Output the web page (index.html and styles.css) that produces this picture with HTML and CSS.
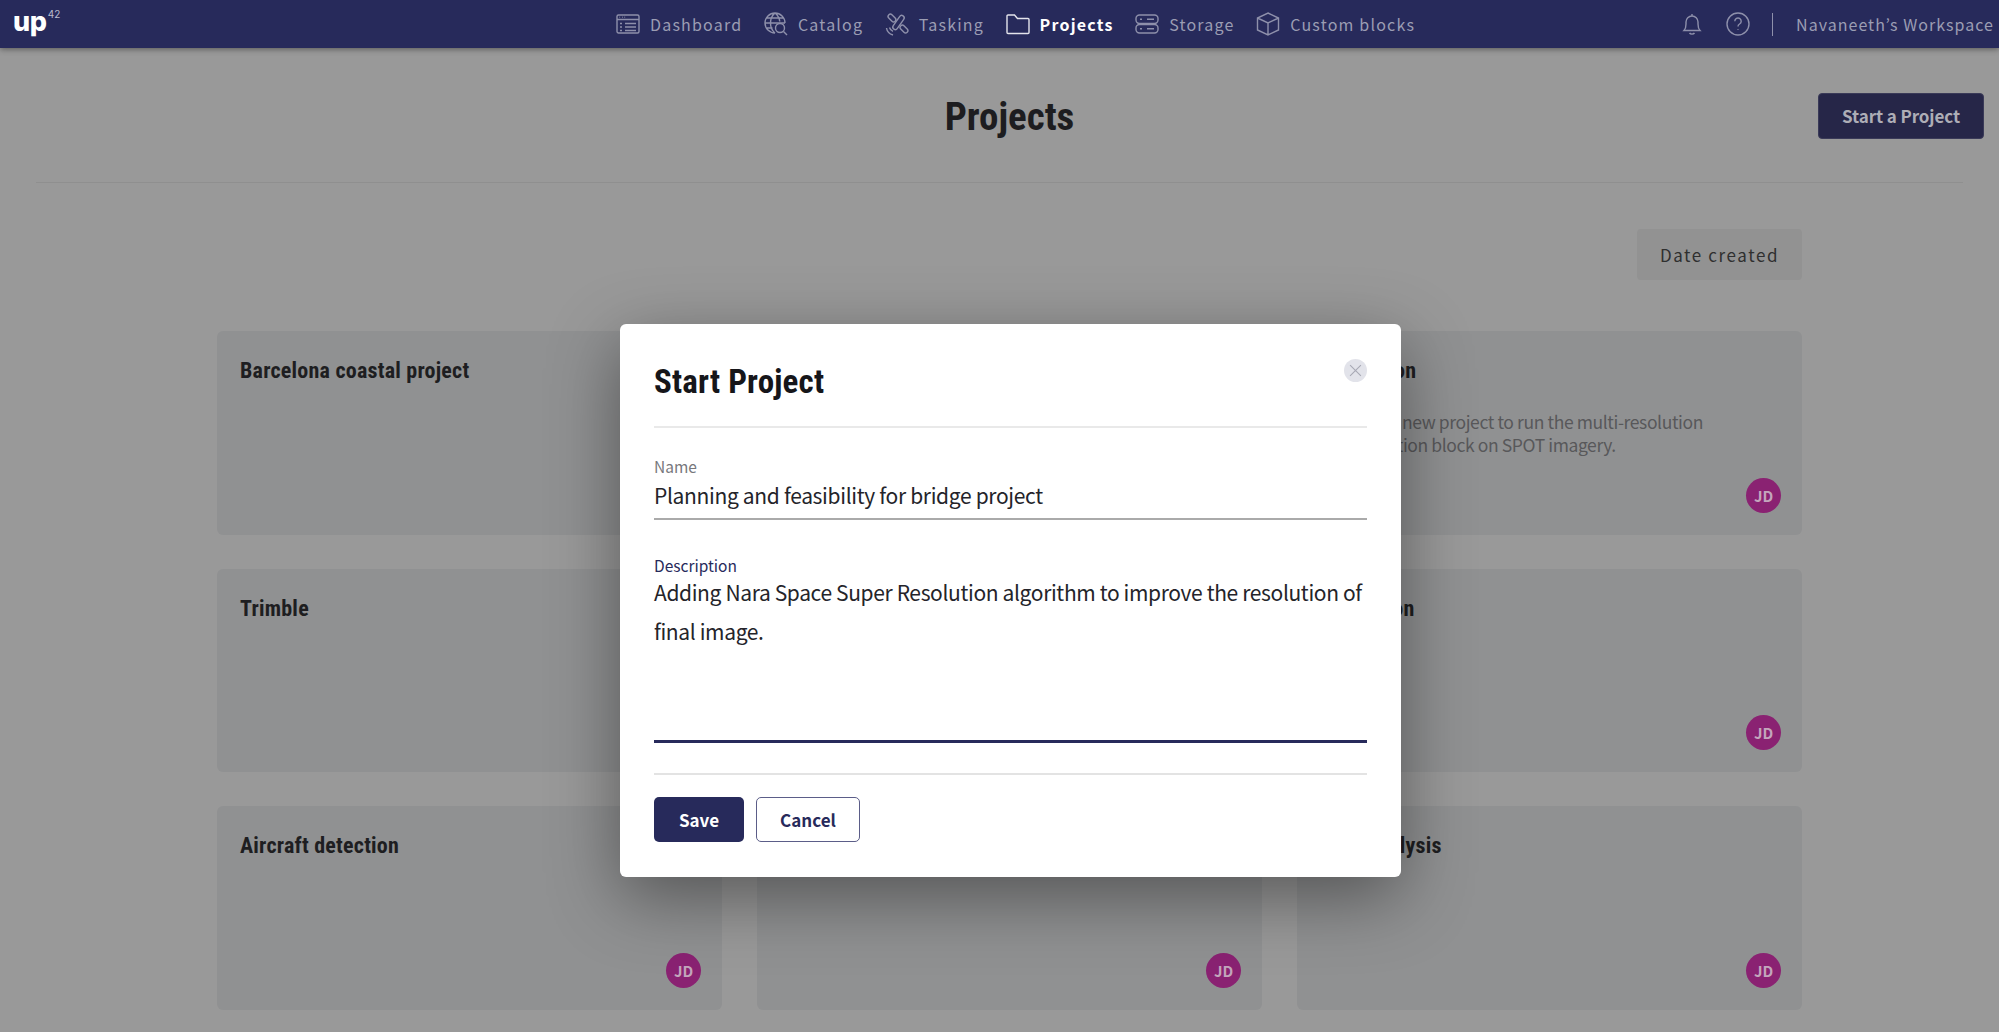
FILE: index.html
```html
<!DOCTYPE html>
<html lang="en">
<head>
<meta charset="utf-8">
<title>Projects</title>
<link rel="stylesheet" href="styles.css">
</head>
<body>
<header class="nav">
  <div class="logo"><span class="logo-up">up</span><span class="logo-42">42</span></div>
  <nav class="nav-items">
    <a class="nav-item">
      <svg class="ico" viewBox="0 0 24 24"><rect x="1" y="3" width="22" height="18" rx="1.5"/><path d="M1 7.5h22M3.5 5.3h.6M6 5.3h.6M8.5 5.3h.6M4 11.5h2M9 11.500h11M4 15h2M9 15h11M4 18.500h2M9 18.500h11"/></svg>
      <span>Dashboard</span>
    </a>
    <a class="nav-item">
      <svg class="ico" viewBox="0 0 24 24"><path d="M11 21a10 10 0 1 1 10-10M1 11h20M2.500 6h17M2.500 16h6M11 1c-6 5-6 15 0 20M11 1c3 2.500 4.500 5.500 4.800 8.500"/><circle cx="16" cy="16" r="4.500"/><path d="M19.500 19.500 23 23"/></svg>
      <span>Catalog</span>
    </a>
    <a class="nav-item">
      <svg class="ico" viewBox="0 0 24 24"><rect x="2.500" y="3.800" width="9" height="4.500" rx="2.200" transform="rotate(45 7 6)"/><rect x="14.500" y="14.800" width="9" height="4.500" rx="2.200" transform="rotate(45 19 17)"/><rect x="5.500" y="8" width="16" height="5" rx="2.500" transform="rotate(-55 13.500 10.500)"/><path d="M1.500 16c.5 3.500 3 6 6.500 7M4.500 15.500c.5 1.800 1.800 3.200 3.500 3.800"/></svg>
      <span>Tasking</span>
    </a>
    <a class="nav-item active">
      <svg class="ico" viewBox="0 0 24 24"><path d="M1 20.500V4a1 1 0 0 1 1-1h6.500l3 3.500H22a1 1 0 0 1 1 1v13a1 1 0 0 1-1 1H2a1 1 0 0 1-1-1z"/></svg>
      <span>Projects</span>
    </a>
    <a class="nav-item">
      <svg class="ico" viewBox="0 0 24 24"><rect x="1" y="3" width="22" height="8.500" rx="3.500"/><rect x="1" y="12.500" width="22" height="8.500" rx="3.500"/><path d="M5 7.200h2M12 7.200h7M5 16.700h2M12 16.700h7"/></svg>
      <span>Storage</span>
    </a>
    <a class="nav-item">
      <svg class="ico" viewBox="0 0 24 24"><path d="M12 1 22.500 6v12L12 23 1.500 18V6zM1.500 6 12 11l10.500-5M12 11v12"/></svg>
      <span>Custom blocks</span>
    </a>
  </nav>
  <div class="nav-right">
    <svg class="ico bell" viewBox="0 0 20 24"><path d="M2 18.500c1.500-1.500 2-3 2-6.500V10a6 6 0 0 1 12 0v2c0 3.500.5 5 2 6.500zM10 2v2M7.500 21c1 1.500 4 1.500 5 0"/></svg>
    <svg class="ico help" viewBox="0 0 24 24"><circle cx="12" cy="12" r="11"/><path d="M8.800 9.200a3.200 3.200 0 1 1 4.800 2.800c-1 .6-1.600 1.200-1.600 2.500M12 17.300v.6"/></svg>
    <span class="nav-sep"></span>
    <span class="workspace">Navaneeth’s Workspace</span>
  </div>
</header>

<main class="page">
  <div class="page-head">
    <h1 class="page-title">Projects</h1>
    <button class="btn-start">Start a Project</button>
  </div>
  <div class="sort-row"><span class="sort-chip">Date created</span></div>
  <section class="grid">
    <article class="card"><h2 class="card-title">Barcelona coastal project</h2><span class="avatar">JD</span></article>
    <article class="card"><h2 class="card-title">Flood monitoring</h2><span class="avatar">JD</span></article>
    <article class="card"><h2 class="card-title">Resolution</h2><p class="card-desc">Creating a new project to run the multi-resolution segmentation block on SPOT imagery.</p><span class="avatar">JD</span></article>
    <article class="card"><h2 class="card-title">Trimble</h2><span class="avatar">JD</span></article>
    <article class="card"><h2 class="card-title">Land cover</h2><span class="avatar">JD</span></article>
    <article class="card"><h2 class="card-title">Inspection</h2><span class="avatar">JD</span></article>
    <article class="card"><h2 class="card-title">Aircraft detection</h2><span class="avatar">JD</span></article>
    <article class="card"><h2 class="card-title">Forest change</h2><span class="avatar">JD</span></article>
    <article class="card"><h2 class="card-title">Crop analysis</h2><span class="avatar">JD</span></article>
  </section>
</main>

<div class="modal">
  <div class="modal-head">
    <h2 class="modal-title">Start Project</h2>
    <span class="modal-close"><svg viewBox="0 0 12 12"><path d="M1 1l10 10M11 1L1 11"/></svg></span>
  </div>
  <div class="field field-name">
    <label class="field-label">Name</label>
    <div class="field-value">Planning and feasibility for bridge project</div>
  </div>
  <div class="field field-desc">
    <label class="field-label focus">Description</label>
    <div class="field-value multiline">Adding Nara Space Super Resolution algorithm to improve the resolution of final image.</div>
  </div>
  <div class="modal-foot">
    <button class="btn-save">Save</button>
    <button class="btn-cancel">Cancel</button>
  </div>
</div>
</body>
</html>
```

FILE: styles.css
```css
* { box-sizing: border-box; }
html, body { margin: 0; height: 100%; overflow: hidden; }
body {
  position: relative;
  background: #999999;
  font-family: "Noto Sans CJK KR", "Noto Sans", sans-serif;
  color: #1c1c1f;
}
.nav {
  height: 48px;
  background: #272a5b;
  display: flex;
  align-items: center;
  box-shadow: 0 1px 6px rgba(0, 0, 0, .45);
  position: relative;
  z-index: 1;
}
.logo { flex: 0 0 616px; padding-left: 13px; display: flex; align-items: flex-start; color: #fff; height: 30px; }
.logo-up { font: 800 27px/25px Inter, sans-serif; letter-spacing: -.3px; }
.logo-42 { font: 400 10px/11px Inter, sans-serif; color: #b9bace; margin-left: 1px; }
.nav-items { display: flex; gap: 21.6px; }
.nav-item { display: flex; align-items: center; gap: 10px; font-size: 16px; letter-spacing: 1.2px; color: #9b9db3; line-height: 24px; }
.nav-item.active { color: #fff; font-weight: 700; }
.ico { width: 24px; height: 24px; fill: none; stroke: #8e90ab; stroke-width: 1.400; display: block; flex: none; }
.nav-item.active .ico { stroke: #e4e4ec; }
.nav-right { margin-left: auto; display: flex; align-items: center; padding-right: 5px; }
.bell { width: 20px; height: 24px; margin-right: 24px; }
.help { width: 24px; height: 24px; margin-right: 22px; }
.nav-sep { width: 1px; height: 23px; background: #8e90ab; margin-right: 23px; }
.workspace { font-size: 16px; letter-spacing: 1.02px; color: #9b9db3; }

.page { padding: 0 36px; }
.page-head {
  height: 135px;
  display: flex;
  align-items: center;
  justify-content: flex-end;
  position: relative;
  border-bottom: 1px solid #8f8f8f;
}
.page-title {
  position: absolute;
  left: 20px; right: 0;
  margin: 0;
  text-align: center;
  font: 700 39px/48px Roboto, sans-serif;
  font-stretch: 75%;
  color: #1d1d20;
  top: 45px;
}
.btn-start {
  width: 166px; height: 46px;
  margin: 1px -21px 0 0;
  background: #262648;
  border: 1px solid #3a3a58;
  border-radius: 4px;
  color: #adadb6;
  font: 700 17px/24px "Noto Sans CJK KR", sans-serif;
  letter-spacing: -.1px;
}
.sort-row { display: flex; justify-content: flex-end; padding: 46px 161px 0 0; height: 148px; }
.sort-chip {
  width: 165px; height: 51px;
  display: flex; align-items: center; justify-content: center;
  background: #929292;
  border-radius: 4px;
  font-size: 17px;
  letter-spacing: 1.6px;
  color: #2f2f2f;
}
.grid {
  display: grid;
  grid-template-columns: repeat(3, 505px);
  grid-auto-rows: 203.5px;
  gap: 34px 35px;
  margin-left: 181px;
}
.card {
  position: relative;
  background: #909192;
  border-radius: 6px;
  padding: 25px 23px;
}
.card-title { margin: 0; font: 700 22px/30px Roboto, sans-serif; letter-spacing: .22px; font-stretch: 75%; color: #1e1e21; }
.card-desc { margin: 24px 0 0; width: 400px; font-size: 17.5px; letter-spacing: -.4px; line-height: 23px; color: #58585a; }
.avatar {
  position: absolute;
  right: 21px; bottom: 22px;
  width: 35px; height: 35px;
  border-radius: 50%;
  background: #8a2272;
  color: #c3a6bc;
  font-size: 15px;
  font-weight: 700;
  display: flex; align-items: center; justify-content: center;
}

.modal {
  position: absolute;
  left: 620px; top: 324px;
  width: 781px; height: 553px;
  background: #fff;
  border-radius: 6px;
  padding: 0 34px;
  box-shadow: 0 20px 70px rgba(0, 0, 0, .42);
  z-index: 2;
}
.modal-head { height: 104px; border-bottom: 2px solid #e9e9e9; position: relative; padding-top: 38px; }
.modal-title { margin: 0; font: 700 33px/40px Roboto, sans-serif; letter-spacing: .2px; font-stretch: 75%; color: #16161a; }
.modal-close {
  position: absolute; right: 0; top: 35px;
  width: 23px; height: 23px;
  border-radius: 50%;
  background: #e2e3ea;
  display: flex; align-items: center; justify-content: center;
}
.modal-close svg { width: 13px; height: 13px; fill: none; stroke: #a8a9b5; stroke-width: 1; }
.field { display: flex; flex-direction: column; }
.field-name { padding-top: 28px; height: 92px; border-bottom: 2px solid #aaaaaa; }
.field-desc { padding-top: 35px; height: 223px; border-bottom: 3px solid #272a5b; }
.field-label { font-size: 15.5px; line-height: 20px; color: #77777c; }
.field-label.focus { color: #272a5b; }
.field-value { font-size: 21px; letter-spacing: -.33px; line-height: 30px; color: #24242a; }
.field-name .field-value { margin-top: 4px; }
.field-desc .field-value { line-height: 39px; margin-top: -2px; letter-spacing: -.365px; }
.modal-foot {
  margin-top: 30px;
  border-top: 2px solid #e3e3e3;
  padding-top: 22px;
  display: flex;
  gap: 12px;
}
.btn-save, .btn-cancel {
  height: 45px;
  border-radius: 5px;
  font: 700 17px/24px "Noto Sans CJK KR", sans-serif;
}
.btn-save { width: 90px; background: #272a5b; border: 0; color: #fff; }
.btn-cancel { width: 104px; background: #fff; border: 1.500px solid #5b5d88; color: #272a5b; }
```
